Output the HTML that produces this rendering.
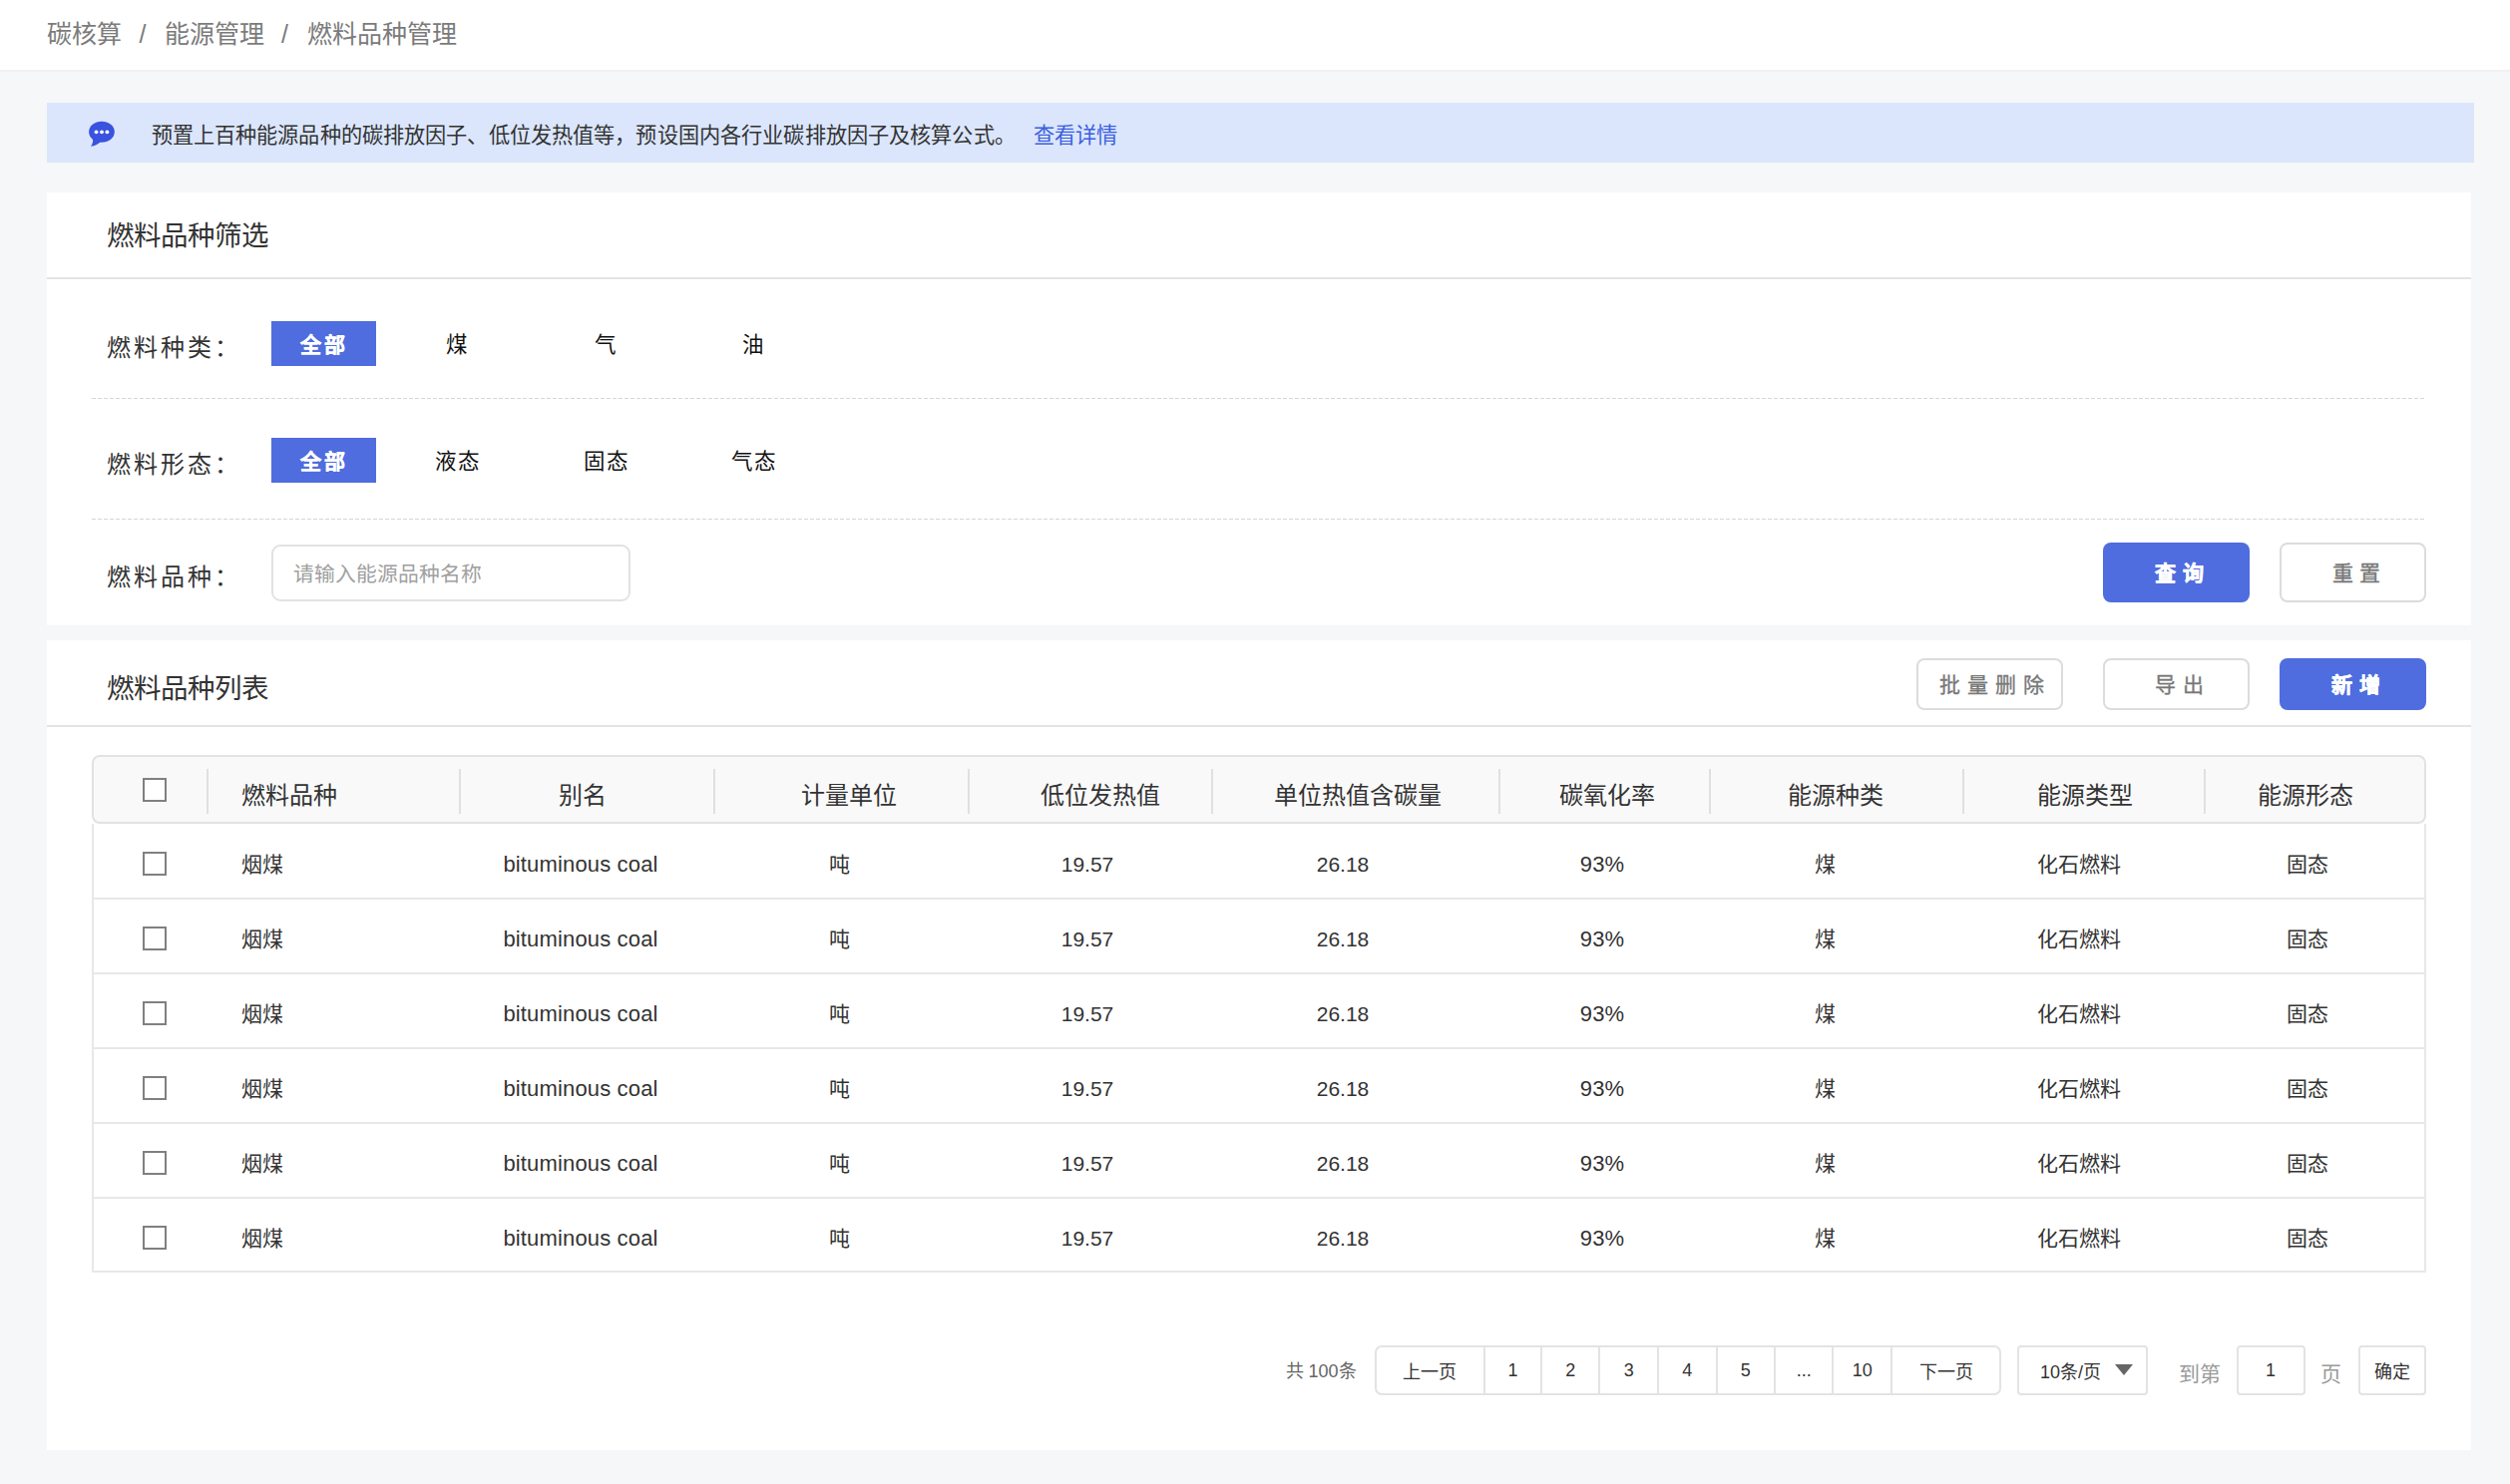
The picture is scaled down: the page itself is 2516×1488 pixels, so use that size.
<!DOCTYPE html>
<html lang="zh-CN"><head><meta charset="utf-8">
<style>
*{margin:0;padding:0;box-sizing:border-box}
html,body{width:2516px;height:1488px;overflow:hidden;background:#f6f7f8;font-family:"Liberation Sans",sans-serif;color:#333}
.a{position:absolute}
.t{position:absolute;line-height:1;white-space:nowrap}
#hdr{left:0;top:0;width:2516px;height:72px;background:#fff;border-bottom:2px solid #f1f1f1}
.bc{font-size:25px;color:#7b7b7b}
#alert{left:47px;top:103px;width:2433px;height:60px;background:#dbe6fc}
.card{background:#fff}
.title{font-size:27.5px;color:#333}
.hline{height:2px;background:#e4e4e4}
.dash{height:1px;background:repeating-linear-gradient(90deg,#d6d6d6 0 4px,transparent 4px 6px)}
.lbl{font-size:24px;color:#333;letter-spacing:3px}
.lbl i{font-style:normal;letter-spacing:0;margin-left:0}
.act{background:#4f6ddf}
.opt{font-size:21.5px;color:#111;letter-spacing:1px}
.btn{border-radius:8px}
.bp{background:#4f6ddf}
.bo{background:#fff;border:2px solid #dcdcdc}
.bt{font-size:21px;font-weight:bold;letter-spacing:7px;-webkit-text-stroke:.5px currentColor}
.bg{color:#777;font-weight:normal;-webkit-text-stroke:.3px currentColor}
.th{font-size:24px;color:#333}
.td{font-size:21px;color:#333}
.tl{font-size:22px;letter-spacing:.15px}
.cb{width:24px;height:24px;border:2px solid #808080;background:#fff}
.pg{font-size:18px;color:#333}
.pbox{border:2px solid #e3e3e3;background:#fff}
</style></head><body>
<div id="hdr" class="a"></div>
<div class="t bc" style="left:47px;top:21.5px">碳核算</div>
<div class="t bc" style="left:139.5px;top:22px">/</div>
<div class="t bc" style="left:165px;top:21.5px">能源管理</div>
<div class="t bc" style="left:282px;top:22px">/</div>
<div class="t bc" style="left:307.5px;top:21.5px">燃料品种管理</div>

<div id="alert" class="a"></div>
<svg class="a" style="left:88px;top:120px" width="28" height="28" viewBox="0 0 28 28">
<ellipse cx="13.95" cy="12.25" rx="12.85" ry="10.45" fill="#3a52e0"/>
<path d="M4.5 17 C5.8 20.5 5.2 24 3 26.8 C7 26.6 10.5 24.6 13 22 Z" fill="#3a52e0"/>
<circle cx="8.5" cy="12.3" r="1.9" fill="#fff"/><circle cx="14" cy="12.3" r="1.9" fill="#fff"/><circle cx="19.4" cy="12.3" r="1.9" fill="#fff"/>
</svg>
<div class="t" style="left:151.5px;top:124.5px;font-size:21.2px;letter-spacing:.13px;color:#333">预置上百种能源品种的碳排放因子、低位发热值等，预设国内各行业碳排放因子及核算公式。</div>
<div class="t" style="left:1035.5px;top:124.5px;font-size:21.2px;color:#3d5fe0">查看详情</div>

<div class="a card" style="left:47px;top:193px;width:2430px;height:434px"></div>
<div class="t title" style="left:107px;top:223px">燃料品种筛选</div>
<div class="a hline" style="left:47px;top:278px;width:2430px"></div>

<div class="t lbl" style="left:107px;top:337px">燃料种类<i>：</i></div>
<div class="a act" style="left:272px;top:322px;width:105px;height:45px"></div>
<div class="t bt" style="left:300.5px;top:335px;color:#fff;font-size:21px;letter-spacing:3.5px;-webkit-text-stroke:.3px #fff">全部</div>
<div class="t opt" style="left:447px;top:335.5px">煤</div>
<div class="t opt" style="left:596px;top:335.5px">气</div>
<div class="t opt" style="left:744px;top:335.5px">油</div>
<div class="t lbl" style="left:107px;top:454px">燃料形态<i>：</i></div>
<div class="a act" style="left:272px;top:439px;width:105px;height:45px"></div>
<div class="t bt" style="left:300.5px;top:452px;color:#fff;font-size:21px;letter-spacing:3.5px;-webkit-text-stroke:.3px #fff">全部</div>
<div class="t opt" style="left:436px;top:452.5px">液态</div>
<div class="t opt" style="left:585px;top:452.5px">固态</div>
<div class="t opt" style="left:733px;top:452.5px">气态</div>
<div class="a dash" style="left:92px;top:399px;width:2338px"></div>
<div class="a dash" style="left:92px;top:520px;width:2338px"></div>
<div class="t lbl" style="left:107px;top:566.5px">燃料品种<i>：</i></div>
<div class="a" style="left:272px;top:546px;width:360px;height:57px;border:2px solid #e2e2e2;border-radius:9px;background:#fff"></div>
<div class="t" style="left:294px;top:565.5px;font-size:20.8px;color:#a0a0a0">请输入能源品种名称</div>
<div class="a btn bp" style="left:2108px;top:544px;width:147px;height:60px"></div>
<div class="t bt" style="left:2160px;top:564px;color:#fff">查询</div>
<div class="a btn bo" style="left:2285px;top:544px;width:147px;height:60px"></div>
<div class="t bt bg" style="left:2337.5px;top:564px;letter-spacing:6.5px">重置</div>

<div class="a card" style="left:47px;top:642px;width:2430px;height:812px"></div>
<div class="t title" style="left:107px;top:676.5px">燃料品种列表</div>
<div class="a btn bo" style="left:1921px;top:660px;width:147px;height:52px"></div>
<div class="t bt bg" style="left:1944px;top:676px;letter-spacing:7px">批量删除</div>
<div class="a btn bo" style="left:2108px;top:660px;width:147px;height:52px"></div>
<div class="t bt bg" style="left:2160px;top:676px">导出</div>
<div class="a btn bp" style="left:2285px;top:660px;width:147px;height:52px"></div>
<div class="t bt" style="left:2337px;top:676px;color:#fff;letter-spacing:6.5px">新增</div>
<div class="a hline" style="left:47px;top:727px;width:2430px"></div>

<div class="a" style="left:92px;top:757px;width:2340px;height:69px;background:#f9f9f9;border:2px solid #e2e2e2;border-radius:8px"></div>
<div class="a" style="left:92px;top:826px;width:2340px;height:450px;border:2px solid #e8e8e8;border-top:0"></div>

<div class="a" style="left:207px;top:771px;width:2px;height:45px;background:#e0e0e0"></div>
<div class="a" style="left:460px;top:771px;width:2px;height:45px;background:#e0e0e0"></div>
<div class="a" style="left:715px;top:771px;width:2px;height:45px;background:#e0e0e0"></div>
<div class="a" style="left:970px;top:771px;width:2px;height:45px;background:#e0e0e0"></div>
<div class="a" style="left:1214px;top:771px;width:2px;height:45px;background:#e0e0e0"></div>
<div class="a" style="left:1502px;top:771px;width:2px;height:45px;background:#e0e0e0"></div>
<div class="a" style="left:1713px;top:771px;width:2px;height:45px;background:#e0e0e0"></div>
<div class="a" style="left:1967px;top:771px;width:2px;height:45px;background:#e0e0e0"></div>
<div class="a" style="left:2209px;top:771px;width:2px;height:45px;background:#e0e0e0"></div>
<div class="a cb" style="left:143px;top:780px"></div>
<div class="t th" style="left:242.0px;top:786px">燃料品种</div>
<div class="t th" style="left:284px;width:600px;text-align:center;top:786px">别名</div>
<div class="t th" style="left:551px;width:600px;text-align:center;top:786px">计量单位</div>
<div class="t th" style="left:803px;width:600px;text-align:center;top:786px">低位发热值</div>
<div class="t th" style="left:1061px;width:600px;text-align:center;top:786px">单位热值含碳量</div>
<div class="t th" style="left:1311px;width:600px;text-align:center;top:786px">碳氧化率</div>
<div class="t th" style="left:1539.5px;width:600px;text-align:center;top:786px">能源种类</div>
<div class="t th" style="left:1790px;width:600px;text-align:center;top:786px">能源类型</div>
<div class="t th" style="left:2010.5px;width:600px;text-align:center;top:786px">能源形态</div>
<div class="a cb" style="left:143px;top:854px"></div>
<div class="t td " style="left:242.0px;top:855.5px">烟煤</div>
<div class="t td tl" style="left:282px;width:600px;text-align:center;top:855.5px">bituminous coal</div>
<div class="t td " style="left:541.6px;width:600px;text-align:center;top:855.5px">吨</div>
<div class="t td " style="left:790px;width:600px;text-align:center;top:855.5px">19.57</div>
<div class="t td " style="left:1046px;width:600px;text-align:center;top:855.5px">26.18</div>
<div class="t td tl" style="left:1306px;width:600px;text-align:center;top:855.5px">93%</div>
<div class="t td " style="left:1529px;width:600px;text-align:center;top:855.5px">煤</div>
<div class="t td " style="left:1783.6px;width:600px;text-align:center;top:855.5px">化石燃料</div>
<div class="t td " style="left:2013px;width:600px;text-align:center;top:855.5px">固态</div>
<div class="a" style="left:94px;top:900px;width:2336px;height:2px;background:#e8e8e8"></div>
<div class="a cb" style="left:143px;top:929px"></div>
<div class="t td " style="left:242.0px;top:930.5px">烟煤</div>
<div class="t td tl" style="left:282px;width:600px;text-align:center;top:930.5px">bituminous coal</div>
<div class="t td " style="left:541.6px;width:600px;text-align:center;top:930.5px">吨</div>
<div class="t td " style="left:790px;width:600px;text-align:center;top:930.5px">19.57</div>
<div class="t td " style="left:1046px;width:600px;text-align:center;top:930.5px">26.18</div>
<div class="t td tl" style="left:1306px;width:600px;text-align:center;top:930.5px">93%</div>
<div class="t td " style="left:1529px;width:600px;text-align:center;top:930.5px">煤</div>
<div class="t td " style="left:1783.6px;width:600px;text-align:center;top:930.5px">化石燃料</div>
<div class="t td " style="left:2013px;width:600px;text-align:center;top:930.5px">固态</div>
<div class="a" style="left:94px;top:975px;width:2336px;height:2px;background:#e8e8e8"></div>
<div class="a cb" style="left:143px;top:1004px"></div>
<div class="t td " style="left:242.0px;top:1005.5px">烟煤</div>
<div class="t td tl" style="left:282px;width:600px;text-align:center;top:1005.5px">bituminous coal</div>
<div class="t td " style="left:541.6px;width:600px;text-align:center;top:1005.5px">吨</div>
<div class="t td " style="left:790px;width:600px;text-align:center;top:1005.5px">19.57</div>
<div class="t td " style="left:1046px;width:600px;text-align:center;top:1005.5px">26.18</div>
<div class="t td tl" style="left:1306px;width:600px;text-align:center;top:1005.5px">93%</div>
<div class="t td " style="left:1529px;width:600px;text-align:center;top:1005.5px">煤</div>
<div class="t td " style="left:1783.6px;width:600px;text-align:center;top:1005.5px">化石燃料</div>
<div class="t td " style="left:2013px;width:600px;text-align:center;top:1005.5px">固态</div>
<div class="a" style="left:94px;top:1050px;width:2336px;height:2px;background:#e8e8e8"></div>
<div class="a cb" style="left:143px;top:1079px"></div>
<div class="t td " style="left:242.0px;top:1080.5px">烟煤</div>
<div class="t td tl" style="left:282px;width:600px;text-align:center;top:1080.5px">bituminous coal</div>
<div class="t td " style="left:541.6px;width:600px;text-align:center;top:1080.5px">吨</div>
<div class="t td " style="left:790px;width:600px;text-align:center;top:1080.5px">19.57</div>
<div class="t td " style="left:1046px;width:600px;text-align:center;top:1080.5px">26.18</div>
<div class="t td tl" style="left:1306px;width:600px;text-align:center;top:1080.5px">93%</div>
<div class="t td " style="left:1529px;width:600px;text-align:center;top:1080.5px">煤</div>
<div class="t td " style="left:1783.6px;width:600px;text-align:center;top:1080.5px">化石燃料</div>
<div class="t td " style="left:2013px;width:600px;text-align:center;top:1080.5px">固态</div>
<div class="a" style="left:94px;top:1125px;width:2336px;height:2px;background:#e8e8e8"></div>
<div class="a cb" style="left:143px;top:1154px"></div>
<div class="t td " style="left:242.0px;top:1155.5px">烟煤</div>
<div class="t td tl" style="left:282px;width:600px;text-align:center;top:1155.5px">bituminous coal</div>
<div class="t td " style="left:541.6px;width:600px;text-align:center;top:1155.5px">吨</div>
<div class="t td " style="left:790px;width:600px;text-align:center;top:1155.5px">19.57</div>
<div class="t td " style="left:1046px;width:600px;text-align:center;top:1155.5px">26.18</div>
<div class="t td tl" style="left:1306px;width:600px;text-align:center;top:1155.5px">93%</div>
<div class="t td " style="left:1529px;width:600px;text-align:center;top:1155.5px">煤</div>
<div class="t td " style="left:1783.6px;width:600px;text-align:center;top:1155.5px">化石燃料</div>
<div class="t td " style="left:2013px;width:600px;text-align:center;top:1155.5px">固态</div>
<div class="a" style="left:94px;top:1200px;width:2336px;height:2px;background:#e8e8e8"></div>
<div class="a cb" style="left:143px;top:1229px"></div>
<div class="t td " style="left:242.0px;top:1230.5px">烟煤</div>
<div class="t td tl" style="left:282px;width:600px;text-align:center;top:1230.5px">bituminous coal</div>
<div class="t td " style="left:541.6px;width:600px;text-align:center;top:1230.5px">吨</div>
<div class="t td " style="left:790px;width:600px;text-align:center;top:1230.5px">19.57</div>
<div class="t td " style="left:1046px;width:600px;text-align:center;top:1230.5px">26.18</div>
<div class="t td tl" style="left:1306px;width:600px;text-align:center;top:1230.5px">93%</div>
<div class="t td " style="left:1529px;width:600px;text-align:center;top:1230.5px">煤</div>
<div class="t td " style="left:1783.6px;width:600px;text-align:center;top:1230.5px">化石燃料</div>
<div class="t td " style="left:2013px;width:600px;text-align:center;top:1230.5px">固态</div>
<div class="t pg" style="left:1288.5px;top:1366px;color:#666">共 100条</div>
<div class="a pbox" style="left:1378px;top:1349px;width:628px;height:50px;border-radius:7px"></div>
<div class="a" style="left:1487px;top:1349px;width:2px;height:50px;background:#e3e3e3"></div>
<div class="a" style="left:1544px;top:1349px;width:2px;height:50px;background:#e3e3e3"></div>
<div class="a" style="left:1602px;top:1349px;width:2px;height:50px;background:#e3e3e3"></div>
<div class="a" style="left:1661px;top:1349px;width:2px;height:50px;background:#e3e3e3"></div>
<div class="a" style="left:1720px;top:1349px;width:2px;height:50px;background:#e3e3e3"></div>
<div class="a" style="left:1778px;top:1349px;width:2px;height:50px;background:#e3e3e3"></div>
<div class="a" style="left:1836px;top:1349px;width:2px;height:50px;background:#e3e3e3"></div>
<div class="a" style="left:1895px;top:1349px;width:2px;height:50px;background:#e3e3e3"></div>
<div class="t pg" style="left:1333.2px;width:200px;text-align:center;top:1366.5px">上一页</div>
<div class="t pg" style="left:1416.5px;width:200px;text-align:center;top:1364.5px">1</div>
<div class="t pg" style="left:1474.2px;width:200px;text-align:center;top:1364.5px">2</div>
<div class="t pg" style="left:1532.7px;width:200px;text-align:center;top:1364.5px">3</div>
<div class="t pg" style="left:1591.3px;width:200px;text-align:center;top:1364.5px">4</div>
<div class="t pg" style="left:1649.8px;width:200px;text-align:center;top:1364.5px">5</div>
<div class="t pg" style="left:1708.2px;width:200px;text-align:center;top:1364.5px">...</div>
<div class="t pg" style="left:1766.7px;width:200px;text-align:center;top:1364.5px">10</div>
<div class="t pg" style="left:1850.7px;width:200px;text-align:center;top:1366.5px">下一页</div>
<div class="a pbox" style="left:2022px;top:1349px;width:131px;height:50px;border-radius:4px"></div>
<div class="t pg" style="left:2045px;top:1366.5px">10条/页</div>
<svg class="a" style="left:2120px;top:1368px" width="18" height="12" viewBox="0 0 18 12"><path d="M0 0H18L9 11Z" fill="#666"/></svg>
<div class="t" style="left:2183.5px;top:1366.5px;font-size:21px;color:#9a9a9a">到第</div>
<div class="a pbox" style="left:2242px;top:1349px;width:69px;height:50px;border-radius:4px"></div>
<div class="t pg" style="left:2176px;width:200px;text-align:center;top:1364.5px">1</div>
<div class="t" style="left:2325.5px;top:1366.5px;font-size:21px;color:#9a9a9a">页</div>
<div class="a pbox" style="left:2364px;top:1349px;width:68px;height:50px;border-radius:4px"></div>
<div class="t pg" style="left:2380px;top:1366.5px">确定</div>
</body></html>
